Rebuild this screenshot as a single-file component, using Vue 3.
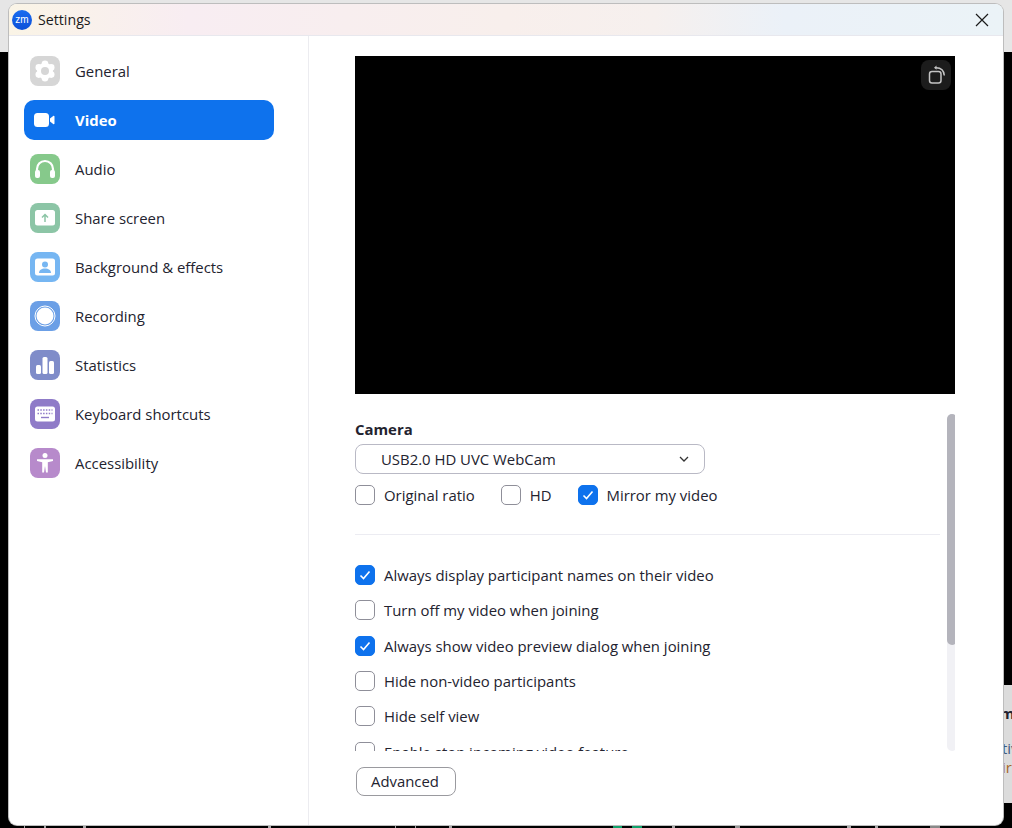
<script setup>
const navItems = [
  { id: 'general', label: 'General' },
  { id: 'video', label: 'Video', active: true },
  { id: 'audio', label: 'Audio' },
  { id: 'share', label: 'Share screen' },
  { id: 'background', label: 'Background & effects' },
  { id: 'recording', label: 'Recording' },
  { id: 'statistics', label: 'Statistics' },
  { id: 'keyboard', label: 'Keyboard shortcuts' },
  { id: 'accessibility', label: 'Accessibility' }
]

const cameraOptions = [
  { label: 'Original ratio', checked: false },
  { label: 'HD', checked: false },
  { label: 'Mirror my video', checked: true }
]

const videoOptions = [
  { label: 'Always display participant names on their video', checked: true },
  { label: 'Turn off my video when joining', checked: false },
  { label: 'Always show video preview dialog when joining', checked: true },
  { label: 'Hide non-video participants', checked: false },
  { label: 'Hide self view', checked: false },
  { label: 'Enable stop incoming video feature', checked: false }
]

// bits of the desktop that peek out under the window
const bottomMarks = [
  { x: 24, w: 1, color: '#aaa' },
  { x: 44, w: 2, color: '#aaa' },
  { x: 83, w: 3, color: '#aaa' },
  { x: 268, w: 3, color: '#aaa' },
  { x: 395, w: 1, color: '#aaa' },
  { x: 415, w: 1, color: '#aaa' },
  { x: 449, w: 3, color: '#aaa' },
  { x: 613, w: 9, color: '#12a36c' },
  { x: 632, w: 10, color: '#12a36c' },
  { x: 672, w: 3, color: '#aaa' },
  { x: 735, w: 5, color: '#999' },
  { x: 847, w: 4, color: '#aaa' },
  { x: 875, w: 3, color: '#aaa' },
  { x: 930, w: 10, color: '#888' }
]
</script>

<template>
  <div class="desktop">
    <div class="desktop-top"></div>
    <div class="behind-card">
      <b>m</b>
      <span>tiv</span>
      <span class="orange">ir</span>
    </div>
    <span
      v-for="mark in bottomMarks"
      :key="mark.x"
      class="bottom-mark"
      :style="{ left: mark.x + 'px', width: mark.w + 'px', background: mark.color }"
    ></span>

    <div class="window">
      <header class="titlebar">
        <span class="logo">zm</span>
        <span class="title">Settings</span>
        <svg class="close" width="14" height="14" viewBox="0 0 14 14">
          <path d="M1 1l12 12M13 1L1 13" stroke="#1a1a1a" stroke-width="1.2" fill="none" />
        </svg>
      </header>

      <div class="body">
        <nav class="sidebar">
          <a v-for="item in navItems" :key="item.id" class="nav-item" :class="{ active: item.active }">
            <svg class="nav-icon" width="30" height="30" viewBox="0 0 30 30">
              <template v-if="item.id === 'general'">
                <rect width="30" height="30" rx="8" fill="#d6d6d6" />
                <g fill="#fff">
                  <circle cx="15" cy="15" r="8" />
                  <circle cx="15" cy="7.800" r="3.300" />
                  <circle cx="15" cy="22.200" r="3.300" />
                  <circle cx="8.800" cy="11.400" r="3.300" />
                  <circle cx="21.200" cy="11.400" r="3.300" />
                  <circle cx="8.800" cy="18.600" r="3.300" />
                  <circle cx="21.200" cy="18.600" r="3.300" />
                </g>
                <circle cx="15" cy="15" r="4" fill="#d6d6d6" />
              </template>
              <template v-else-if="item.id === 'video'">
                <rect x="4" y="8" width="15" height="14" rx="3.500" fill="#fff" />
                <path d="M20 13.500l3.200-2.600c.6-.5 1.300-.1 1.300.6v7c0 .7-.7 1.100-1.300.6L20 16.500z" fill="#fff" />
              </template>
              <template v-else-if="item.id === 'audio'">
                <rect width="30" height="30" rx="8" fill="#86c98b" />
                <path d="M7 18v-3a8 8 0 0 1 16 0v3" stroke="#fff" stroke-width="2.200" fill="none" />
                <rect x="5" y="16" width="5" height="8" rx="2" fill="#fff" />
                <rect x="20" y="16" width="5" height="8" rx="2" fill="#fff" />
              </template>
              <template v-else-if="item.id === 'share'">
                <rect width="30" height="30" rx="8" fill="#8cc5a6" />
                <rect x="5" y="7" width="20" height="15.500" rx="2.500" fill="#fff" />
                <path d="M15 19v-7M12 14.500l3-3 3 3" stroke="#8cc5a6" stroke-width="1.500" fill="none" />
              </template>
              <template v-else-if="item.id === 'background'">
                <rect width="30" height="30" rx="8" fill="#76b6f2" />
                <rect x="5" y="6.500" width="20" height="17" rx="2.500" fill="#fff" />
                <circle cx="15" cy="12.500" r="3" fill="#76b6f2" />
                <path d="M9 21c0-3 2.500-4.500 6-4.500s6 1.500 6 4.500z" fill="#76b6f2" />
              </template>
              <template v-else-if="item.id === 'recording'">
                <rect width="30" height="30" rx="8" fill="#6b9fe6" />
                <circle cx="15" cy="15" r="10" fill="none" stroke="#fff" stroke-width="1" />
                <circle cx="15" cy="15" r="8.500" fill="#fff" />
              </template>
              <template v-else-if="item.id === 'statistics'">
                <rect width="30" height="30" rx="8" fill="#7f8cc9" />
                <rect x="6" y="15" width="5" height="9" rx="1.500" fill="#fff" />
                <rect x="12.500" y="7" width="5" height="17" rx="1.500" fill="#fff" />
                <rect x="19" y="11" width="5" height="13" rx="1.500" fill="#fff" />
              </template>
              <template v-else-if="item.id === 'keyboard'">
                <rect width="30" height="30" rx="8" fill="#8f7bc8" />
                <rect x="5" y="7.500" width="20" height="15" rx="2.500" fill="#fff" />
                <path d="M7.500 11h15M7.500 14.500h15" stroke="#8f7bc8" stroke-width="1.400" stroke-dasharray="1.500 1.300" fill="none" />
                <path d="M11 18.500h8" stroke="#8f7bc8" stroke-width="1.400" fill="none" />
              </template>
              <template v-else>
                <rect width="30" height="30" rx="8" fill="#b78acb" />
                <circle cx="15" cy="7.500" r="2.500" fill="#fff" />
                <path d="M7 11.200h16v1.800l-5.200 1.200v10.300h-1.800l-1-6.500-1 6.500h-1.800V14.200L7 13z" fill="#fff" />
              </template>
            </svg>
            <span>{{ item.label }}</span>
          </a>
        </nav>

        <main class="content">
          <div class="preview">
            <button class="rotate">
              <svg width="20" height="20" viewBox="0 0 20 20">
                <rect x="3.500" y="6.500" width="11.500" height="11.500" rx="2.500" fill="none" stroke="#c4c4c4" stroke-width="1.500" />
                <path d="M10 2.700c5 0 8 3 8.300 7.800" fill="none" stroke="#c4c4c4" stroke-width="1.500" />
                <path d="M10.500 .6L8 2.700l2.500 2.100z" fill="#c4c4c4" />
              </svg>
            </button>
          </div>

          <div class="scroll-area">
            <div class="scroll-inner">
              <h3 class="section-label">Camera</h3>
              <div class="select">
                <span>USB2.0 HD UVC WebCam</span>
                <svg width="10" height="6" viewBox="0 0 10 6">
                  <path d="M1 1l4 4 4-4" stroke="#333" stroke-width="1.300" fill="none" />
                </svg>
              </div>
              <div class="camera-row">
                <label v-for="opt in cameraOptions" :key="opt.label" class="check">
                  <span class="box" :class="{ on: opt.checked }">
                    <svg v-if="opt.checked" width="14" height="14" viewBox="0 0 14 14">
                      <path d="M2.500 7.500l3 3 6-7" stroke="#fff" stroke-width="1.600" fill="none" />
                    </svg>
                  </span>
                  {{ opt.label }}
                </label>
              </div>
              <div class="divider"></div>
              <div class="option-list">
                <label v-for="opt in videoOptions" :key="opt.label" class="check">
                  <span class="box" :class="{ on: opt.checked }">
                    <svg v-if="opt.checked" width="14" height="14" viewBox="0 0 14 14">
                      <path d="M2.500 7.500l3 3 6-7" stroke="#fff" stroke-width="1.600" fill="none" />
                    </svg>
                  </span>
                  {{ opt.label }}
                </label>
              </div>
            </div>
            <div class="scrollbar"><div class="thumb"></div></div>
          </div>

          <button class="advanced">Advanced</button>
        </main>
      </div>
    </div>
  </div>
</template>

<style scoped>
.desktop {
  position: relative;
  width: 1012px;
  height: 828px;
  box-sizing: border-box;
  padding: 4px 9px 3px;
  background: #000;
  overflow: hidden;
  font-family: "Open Sans", "Noto Sans", sans-serif;
  font-size: 14.9px;
  color: #23232f;
}
.desktop-top {
  position: absolute;
  top: 0;
  left: 0;
  right: 0;
  height: 52px;
  background: #e6e6e6;
}
.behind-card {
  position: absolute;
  left: 1003px;
  top: 685px;
  width: 20px;
  height: 118px;
  background: #dcdcdc;
  display: flex;
  flex-direction: column;
  line-height: 19px;
  padding-top: 19px;
  box-sizing: border-box;
}
.behind-card b {
  margin-bottom: 16px;
  margin-left: -3px;
}
.behind-card span {
  margin-left: -1px;
  color: #3c5a80;
}
.behind-card .orange {
  color: #a8682a;
}
.bottom-mark {
  position: absolute;
  bottom: 0;
  height: 3px;
}
.window {
  position: relative;
  height: 100%;
  display: flex;
  flex-direction: column;
  background: #fff;
  border-radius: 8px;
  overflow: hidden;
  box-shadow: 0 0 0 1px #bdbdbd;
}
.titlebar {
  display: flex;
  align-items: center;
  box-sizing: border-box;
  height: 32px;
  flex-shrink: 0;
  padding: 0 14px 0 3px;
  background: linear-gradient(90deg, #faf4e6 0%, #f8edf2 18%, #f8efec 50%, #f6f0ee 65%, #ebf1f8 78%, #ebf3f7 100%);
  border-bottom: 1px solid #e8e8ee;
}
.logo {
  width: 20px;
  height: 20px;
  border-radius: 50%;
  background: linear-gradient(180deg, #1a6cf0, #0b4fd8);
  color: #fff;
  font-family: "Liberation Sans", sans-serif;
  font-size: 10px;
  line-height: 19px;
  text-align: center;
}
.title {
  margin-left: 6px;
  font-size: 14.200px;
  color: #1a1a1a;
}
.close {
  margin-left: auto;
}
.body {
  flex: 1;
  display: flex;
  min-height: 0;
}
.sidebar {
  width: 300px;
  flex-shrink: 0;
  box-sizing: border-box;
  padding: 15px 34px 0 15px;
  border-right: 1px solid #ececf0;
  display: flex;
  flex-direction: column;
  gap: 9px;
}
.nav-item {
  display: flex;
  align-items: center;
  height: 40px;
  padding-left: 6px;
  gap: 15px;
  border-radius: 10px;
}
.nav-item.active {
  background: #0e72ed;
  color: #fff;
  font-weight: 700;
}
.nav-icon {
  flex-shrink: 0;
}
.content {
  flex: 1;
  padding: 20px 48px 0 46px;
  min-width: 0;
}
.preview {
  position: relative;
  width: 600px;
  height: 338px;
  background: #000;
}
.rotate {
  position: absolute;
  top: 4px;
  right: 4px;
  width: 30px;
  height: 30px;
  padding: 5px;
  border: 0;
  border-radius: 8px;
  background: #1c1c1c;
}
.scroll-area {
  position: relative;
  margin-top: 20px;
  height: 337px;
  overflow: hidden;
}
.scroll-inner {
  width: 585px;
  padding-top: 5px;
}
.section-label {
  margin: 0;
  font-size: 14.9px;
  font-weight: 700;
  line-height: 20px;
}
.select {
  display: flex;
  align-items: center;
  justify-content: space-between;
  box-sizing: border-box;
  width: 350px;
  height: 30px;
  margin-top: 5px;
  padding: 0 15px 0 25px;
  border: 1px solid #b9b9c5;
  border-radius: 8px;
}
.camera-row {
  display: flex;
  gap: 26px;
  margin-top: 11px;
}
.check {
  display: flex;
  align-items: center;
  gap: 9px;
  height: 20px;
}
.box {
  width: 18px;
  height: 18px;
  border: 1px solid #8f8f99;
  border-radius: 5px;
  flex-shrink: 0;
  display: flex;
  align-items: center;
  justify-content: center;
}
.box.on {
  background: #0e72ed;
  border-color: #0e72ed;
}
.divider {
  height: 1px;
  margin-top: 29px;
  background: #ececf2;
}
.option-list {
  display: flex;
  flex-direction: column;
  gap: 15.350px;
  margin-top: 30px;
}
.scrollbar {
  position: absolute;
  top: 0;
  right: -2px;
  width: 10px;
  height: 100%;
  border-radius: 5px;
  background: #f1f1f5;
}
.thumb {
  height: 231px;
  border-radius: 5px;
  background: #b4b4bc;
}
.advanced {
  display: block;
  width: 100px;
  height: 29px;
  margin: 16px 0 0 1px;
  padding: 0 2px 2px 0;
  border: 1px solid #9a9a9f;
  border-radius: 8px;
  background: #fff;
  font: inherit;
  color: #23232f;
}
</style>

<style>
body {
  background: #000;
}
</style>
